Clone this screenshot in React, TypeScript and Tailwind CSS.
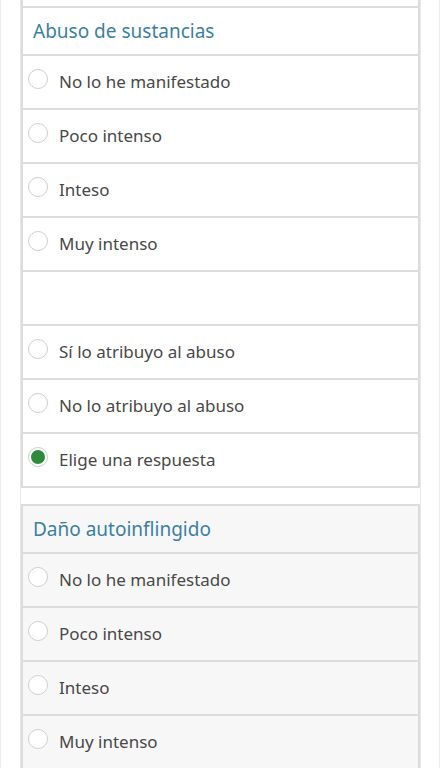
import React from "react";

type Opt = { label: string; checked?: boolean } | null;

function Radio({ checked }: { checked?: boolean }) {
  return (
    <span className="relative -top-[3px] flex h-[20px] w-[20px] shrink-0 items-center justify-center rounded-full border border-[#cfcfcf] bg-white">
      {checked ? <span className="h-[14px] w-[14px] rounded-full bg-[#2f8a3a]" /> : null}
    </span>
  );
}

function Section({ title, options, gray }: { title: string; options: Opt[]; gray?: boolean }) {
  return (
    <div className={`border-2 border-[#dcdcdc] ${gray ? "bg-[#f7f7f7]" : "bg-white"}`}>
      <div className="flex h-[48px] items-center border-b-2 border-[#dcdcdc] pl-[10px] text-[19px] text-[#3c7fa2]">
        {title}
      </div>
      {options.map((o, i) => (
        <div
          key={i}
          className={`flex items-center gap-[11px] pl-[5px] text-[17px] text-[#484848] ${i < options.length - 1 ? "h-[54px] border-b-2 border-[#dcdcdc]" : "h-[52px]"}`}
        >
          {o ? (
            <>
              <Radio checked={o.checked} />
              <span>{o.label}</span>
            </>
          ) : null}
        </div>
      ))}
    </div>
  );
}

export default function App() {
  const first: Opt[] = [
    { label: "No lo he manifestado" },
    { label: "Poco intenso" },
    { label: "Inteso" },
    { label: "Muy intenso" },
    null,
    { label: "Sí lo atribuyo al abuso" },
    { label: "No lo atribuyo al abuso" },
    { label: "Elige una respuesta", checked: true },
  ];
  const second: Opt[] = [
    { label: "No lo he manifestado" },
    { label: "Poco intenso" },
    { label: "Inteso" },
    { label: "Muy intenso" },
    { label: "" },
  ];
  return (
    <div
      className="h-[768px] overflow-hidden border-x border-[#ededed] bg-white"
      style={{ fontFamily: '"Noto Sans", "Open Sans", sans-serif' }}
    >
      <div className="ml-[19px] w-[401px] border-x border-[#e9e9e9] bg-white">
        <div className="h-[6px] border-x-2 border-[#dcdcdc] bg-white" />
        <Section title="Abuso de sustancias" options={first} />
        <div className="h-[16px]" />
        <Section title="Daño autoinflingido" options={second} gray />
      </div>
    </div>
  );
}
